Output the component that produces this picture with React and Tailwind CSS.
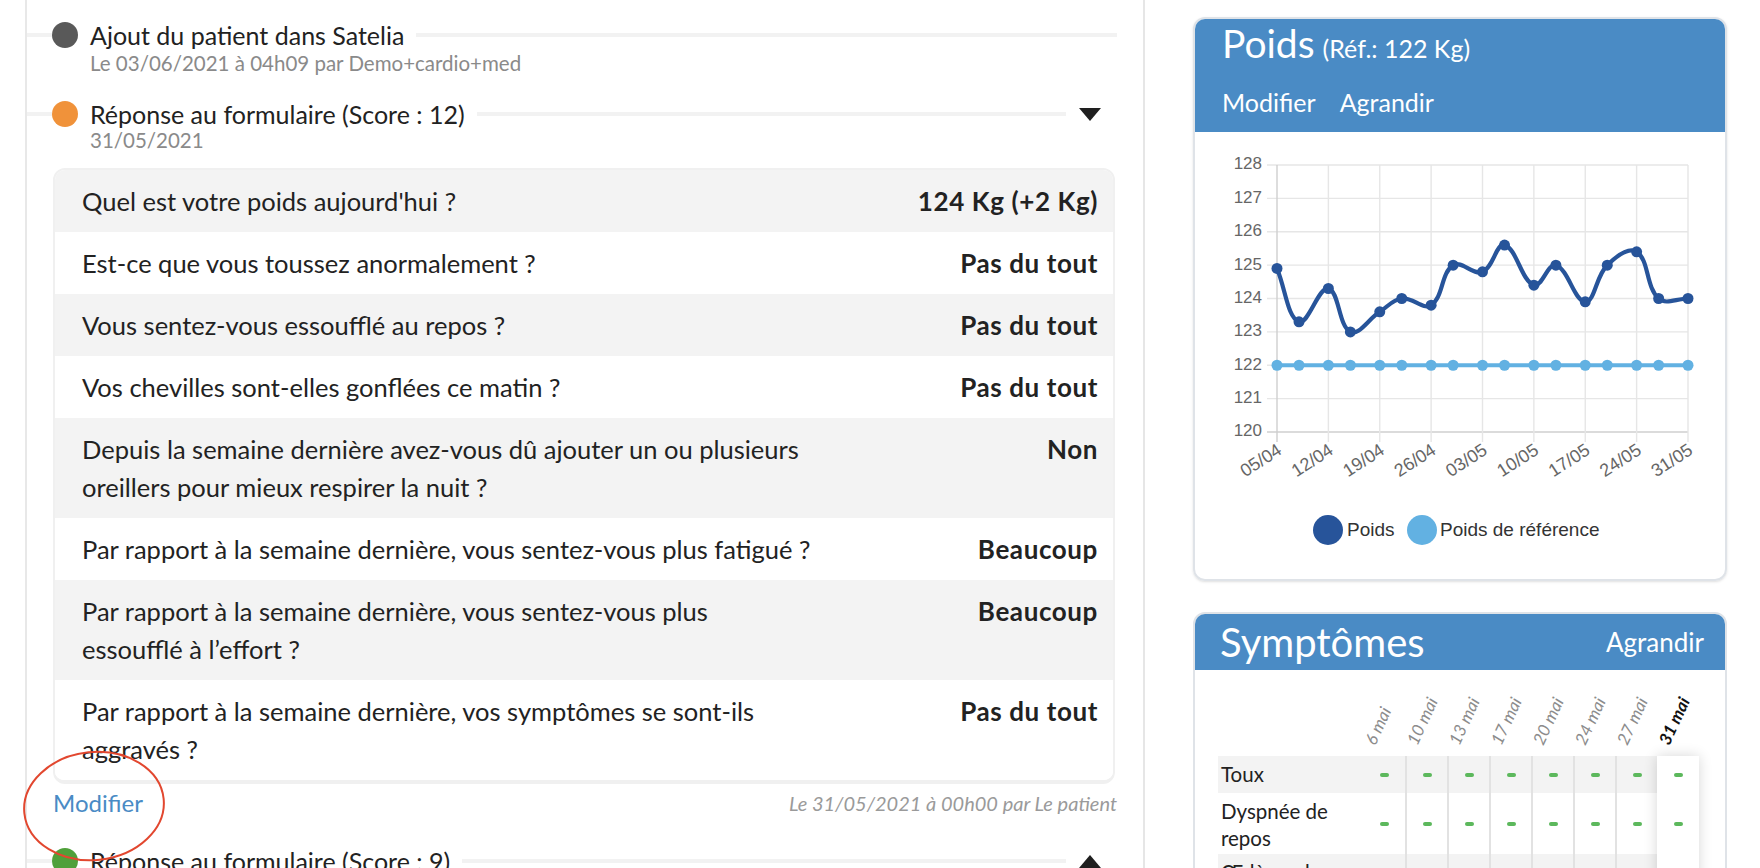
import React from "react";

const QUESTIONS = [
  { q: ["Quel est votre poids aujourd'hui ?"], a: "124 Kg (+2 Kg)" },
  { q: ["Est-ce que vous toussez anormalement ?"], a: "Pas du tout" },
  { q: ["Vous sentez-vous essoufflé au repos ?"], a: "Pas du tout" },
  { q: ["Vos chevilles sont-elles gonflées ce matin ?"], a: "Pas du tout" },
  {
    q: ["Depuis la semaine dernière avez-vous dû ajouter un ou plusieurs", "oreillers pour mieux respirer la nuit ?"],
    a: "Non",
  },
  { q: ["Par rapport à la semaine dernière, vous sentez-vous plus fatigué ?"], a: "Beaucoup" },
  { q: ["Par rapport à la semaine dernière, vous sentez-vous plus", "essoufflé à l’effort ?"], a: "Beaucoup" },
  { q: ["Par rapport à la semaine dernière, vos symptômes se sont-ils", "aggravés ?"], a: "Pas du tout" },
];

const DAYS = [0, 3, 7, 10, 14, 17, 21, 24, 28, 31, 35, 38, 42, 45, 49, 52, 56];
const WEIGHTS = [124.9, 123.3, 124.3, 123.0, 123.6, 124.0, 123.8, 125.0, 124.8, 125.6, 124.4, 125.0, 123.9, 125.0, 125.4, 124.0, 124.0];
const WEEKS = ["05/04", "12/04", "19/04", "26/04", "03/05", "10/05", "17/05", "24/05", "31/05"];

const SYMPTOM_DATES = ["6 mai", "10 mai", "13 mai", "17 mai", "20 mai", "24 mai", "27 mai", "31 mai"];
const SYMPTOM_ROWS = [
  { label: "Toux", h: "h-[37px]", bg: "bg-[#f3f3f3]" },
  { label: "Dyspnée de repos", h: "h-[61px]", bg: "bg-white" },
  { label: "Œdème des chevilles", h: "h-[61px]", bg: "bg-[#f3f3f3]" },
];

// chart.js style spline (tension 0.4)
function smoothPath(pts, t = 0.4) {
  const ctrl = pts.map((p, i) => {
    const prev = pts[i - 1] || p;
    const next = pts[i + 1] || p;
    const d01 = Math.hypot(p.x - prev.x, p.y - prev.y);
    const d12 = Math.hypot(next.x - p.x, next.y - p.y);
    const s01 = d01 + d12 ? d01 / (d01 + d12) : 0;
    const s12 = d01 + d12 ? d12 / (d01 + d12) : 0;
    return {
      px: p.x - t * s01 * (next.x - prev.x),
      py: p.y - t * s01 * (next.y - prev.y),
      nx: p.x + t * s12 * (next.x - prev.x),
      ny: p.y + t * s12 * (next.y - prev.y),
    };
  });
  let d = `M${pts[0].x},${pts[0].y}`;
  for (let i = 1; i < pts.length; i++) {
    d += ` C${ctrl[i - 1].nx},${ctrl[i - 1].ny} ${ctrl[i].px},${ctrl[i].py} ${pts[i].x},${pts[i].y}`;
  }
  return d;
}

function WeightChart() {
  const X0 = 82, X1 = 493, Y0 = 33, Y1 = 300;
  const xs = (d) => X0 + (d / 56) * (X1 - X0);
  const ys = (v) => Y1 - ((v - 120) / 8) * (Y1 - Y0);
  const pts = DAYS.map((d, i) => ({ x: xs(d), y: ys(WEIGHTS[i]) }));
  const ref = DAYS.map((d) => ({ x: xs(d), y: ys(122) }));

  return (
    <svg className="block h-[447px] w-[530px]" viewBox="0 0 530 447" style={{ fontFamily: "'Liberation Sans', Arial, sans-serif" }}>
      {[0, 1, 2, 3, 4, 5, 6, 7, 8].map((i) => {
        const y = ys(120 + i);
        return (
          <g key={i}>
            <line x1={72} x2={X1} y1={y} y2={y} stroke={i === 0 ? "#cfcfcf" : "#e6e6e6"} strokeWidth="1.4" />
            <text x={67} y={y} dominantBaseline="middle" textAnchor="end" fontSize="17" fill="#666">
              {120 + i}
            </text>
          </g>
        );
      })}
      {WEEKS.map((w, i) => {
        const x = xs(i * 7);
        return (
          <g key={w}>
            <line x1={x} x2={x} y1={Y0} y2={Y1 + 10} stroke={i === 0 ? "#cfcfcf" : "#e6e6e6"} strokeWidth="1.4" />
            <text x={x + 6} y={Y1 + 21} textAnchor="end" fontSize="18" fill="#666" transform={`rotate(-33 ${x + 6} ${Y1 + 21})`}>
              {w}
            </text>
          </g>
        );
      })}
      <path d={smoothPath(ref)} fill="none" stroke="#62b1e2" strokeWidth="4" />
      {ref.map((p, i) => (
        <circle key={i} cx={p.x} cy={p.y} r="5.5" fill="#62b1e2" />
      ))}
      <path d={smoothPath(pts)} fill="none" stroke="#27549a" strokeWidth="4.2" />
      {pts.map((p, i) => (
        <circle key={i} cx={p.x} cy={p.y} r="5.5" fill="#27549a" />
      ))}
      <circle cx="133" cy="398" r="15" fill="#27549a" />
      <text x="152" y="399" dominantBaseline="middle" fontSize="19" fill="#333">Poids</text>
      <circle cx="227" cy="398" r="15" fill="#62b1e2" />
      <text x="245" y="399" dominantBaseline="middle" fontSize="19" fill="#333">Poids de référence</text>
    </svg>
  );
}

function Caret({ up }) {
  return (
    <svg className="ml-[13px] mr-[16px] h-[13px] w-[22px] shrink-0" viewBox="0 0 22 13">
      <polygon points={up ? "11,0 22,13 0,13" : "0,0 22,0 11,13"} fill="#1f1f1f" />
    </svg>
  );
}

function ItemHead({ dot, title, caret }) {
  return (
    <div className="flex h-[28px] items-center">
      <div className="h-[4px] w-[25px] bg-[#f2f2f2]" />
      <div className={`h-[26px] w-[26px] shrink-0 rounded-full ${dot}`} />
      <div className="whitespace-nowrap px-[12px] text-[25px] leading-[28px] text-[#222]">{title}</div>
      <div className="h-[4px] flex-1 bg-[#f2f2f2]" />
      {caret ? <Caret up={caret === "up"} /> : null}
    </div>
  );
}

function Questions() {
  return (
    <div className="ml-[26px] mr-[2px] mt-[16px] overflow-hidden rounded-[12px] border-2 border-b-4 border-[#f0f0f0]">
      {QUESTIONS.map((row, i) => (
        <div
          key={i}
          className={`flex items-start justify-between py-[12px] pl-[27px] pr-[15px] text-[25.5px] leading-[38px] text-[#222] ${
            i % 2 === 0 ? "bg-[#f3f3f3]" : "bg-white"
          }`}
        >
          <div>
            {row.q.map((l, j) => (
              <div key={j} className="whitespace-nowrap">{l}</div>
            ))}
          </div>
          <div className="whitespace-nowrap text-[26px] font-bold tracking-[0.6px]">{row.a}</div>
        </div>
      ))}
    </div>
  );
}

function SymptomTable() {
  return (
    <div className="flex pl-[23px]">
      <div className="w-[145px]">
        <div className="h-[86px]" />
        {SYMPTOM_ROWS.map((r) => (
          <div key={r.label} className={`${r.h} ${r.bg} px-[3px] py-[5px] text-[20.5px] leading-[27px] text-[#222]`}>
            {r.label}
          </div>
        ))}
      </div>
      {SYMPTOM_DATES.map((d, i) => {
        const last = i === SYMPTOM_DATES.length - 1;
        return (
          <div key={d} className="w-[42px]">
            <div className="relative h-[86px]">
              <span
                className={`absolute bottom-[9px] left-[14px] origin-bottom-left -rotate-[65deg] whitespace-nowrap text-[17px] italic leading-none ${
                  last ? "font-bold text-[#111]" : "text-[#8c8c8c]"
                }`}
              >
                {d}
              </span>
            </div>
            <div className={last ? "relative z-10 bg-white shadow-[0_0_14px_rgba(0,0,0,0.16)]" : ""}>
              {SYMPTOM_ROWS.map((r) => (
                <div
                  key={r.label}
                  className={`flex ${r.h} items-center justify-center ${last ? "bg-white" : r.bg} ${
                    i > 0 && !last ? "border-l-2 border-[#e2e2e2]" : ""
                  }`}
                >
                  <div className="h-[4px] w-[9px] rounded-full bg-[#5cb85c]" />
                </div>
              ))}
            </div>
          </div>
        );
      })}
    </div>
  );
}

export default function App() {
  return (
    <div className="relative flex h-[868px] w-[1760px] overflow-hidden bg-white font-['Lato','Open_Sans',sans-serif]">
      {/* timeline */}
      <div className="h-full w-[1145px] shrink-0 border-r-2 border-[#e6e6e6] pl-[25px]">
        <div className="h-full border-l-2 border-[#e8e8e8] pr-[26px] pt-[21px]">
          <ItemHead dot="bg-[#595959]" title="Ajout du patient dans Satelia" />
          <div className="mt-[2px] pl-[63px] text-[20.5px] leading-[24px] text-[#8a8a8a]">
            Le 03/06/2021 à 04h09 par Demo+cardio+med
          </div>

          <div className="mt-[25px]">
            <ItemHead dot="bg-[#f0923a]" title="Réponse au formulaire (Score : 12)" caret="down" />
          </div>
          <div className="pl-[63px] text-[20.5px] leading-[24px] text-[#8a8a8a]">31/05/2021</div>

          <Questions />

          <div className="ml-[26px] mt-[4px] flex items-center justify-between">
            <span className="text-[24px] leading-[28px] text-[#4a8bc5]">Modifier</span>
            <span className="text-[20px] italic text-[#9a9a9a]">Le 31/05/2021 à 00h00 par Le patient</span>
          </div>

          <div className="mt-[29px]">
            <ItemHead dot="bg-[#4fa03a]" title="Réponse au formulaire (Score : 9)" caret="up" />
          </div>
        </div>
      </div>

      {/* right column */}
      <div className="flex-1 pl-[48px] pt-[17px]">
        <div className="h-[564px] w-[534px] overflow-hidden rounded-[12px] border-2 border-[#dfe3e8] shadow-sm">
          <div className="h-[113px] bg-[#4a8bc5] px-[27px] pt-[2px] text-white">
            <div className="flex items-baseline gap-[8px] leading-[44px]">
              <span className="text-[39px]">Poids</span>
              <span className="text-[25px]">(Réf.: 122 Kg)</span>
            </div>
            <div className="mt-[17px] flex gap-[24px] text-[25px] leading-[30px]">
              <span>Modifier</span>
              <span>Agrandir</span>
            </div>
          </div>
          <WeightChart />
        </div>

        <div className="mt-[31px] h-[300px] w-[534px] overflow-hidden rounded-t-[12px] border-2 border-[#dfe3e8]">
          <div className="flex h-[56px] items-center justify-between bg-[#4a8bc5] pl-[25px] pr-[21px] text-white">
            <span className="text-[40px] leading-none">Symptômes</span>
            <span className="text-[26px]">Agrandir</span>
          </div>
          <SymptomTable />
        </div>
      </div>

      {/* hand-drawn annotation */}
      <svg className="absolute left-[20px] top-[749px] h-[116px] w-[148px]" viewBox="0 0 148 116">
        <ellipse cx="74" cy="57" rx="70" ry="54" fill="none" stroke="#e2472f" strokeWidth="2" transform="rotate(-6 74 57)" />
      </svg>
    </div>
  );
}
